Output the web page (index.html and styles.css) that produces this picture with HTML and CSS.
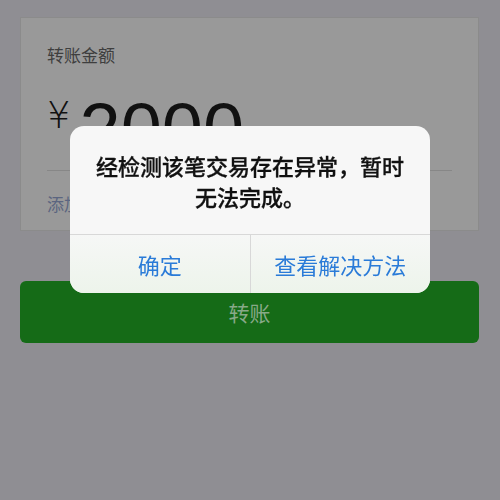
FILE: index.html
```html
<!DOCTYPE html>
<html lang="zh-CN">
<head>
<meta charset="UTF-8">
<meta name="viewport" content="width=device-width, initial-scale=1.0">
<title>转账</title>
<link rel="stylesheet" href="styles.css">
</head>
<body>
    <div class="page">
        <div class="transfer-card">
            <div class="card-label">转账金额</div>
            <div class="amount">
                <span class="currency">¥</span>
                <span class="amount-value">2000</span>
            </div>
            <div class="remark">添加转账说明</div>
        </div>
        <button class="transfer-btn" type="button">转账</button>
    </div>

    <div class="mask">
        <div class="alert">
            <div class="alert-msg">经检测该笔交易存在异常，暂时<br>无法完成。</div>
            <div class="alert-actions">
                <a href="#" class="alert-btn">确定</a>
                <a href="#" class="alert-btn">查看解决方法</a>
            </div>
        </div>
    </div>
</body>
</html>
```

FILE: styles.css
```css
body {
    margin: 0;
    padding: 0;
    background-color: #8f8e93;
    font-family: "Noto Sans CJK SC", "Liberation Sans", sans-serif;
}
.page {
    padding: 17px 21px 0 20px;
}
.transfer-card {
    background-color: #999999;
    border: 1px solid #8b8b8b;
    padding: 0 26px 0 26px;
    box-sizing: border-box;
    height: 214px;
}
.card-label {
    padding-top: 26px;
    font-size: 17px;
    line-height: 22px;
    color: #3e3e3e;
}
.amount {
    display: flex;
    align-items: flex-start;
    height: 104px;
    border-bottom: 1px solid #878787;
    color: #111;
    overflow: hidden;
}
.currency {
    font-family: "DejaVu Sans", sans-serif;
    font-weight: 300;
    font-size: 37px;
    margin-right: 9px;
    margin-top: 30px;
    line-height: 40px;
}
.amount-value {
    font-family: "Liberation Sans", sans-serif;
    font-size: 74px;
    line-height: 88px;
    margin-top: 20px;
}
.remark {
    padding-top: 20px;
    font-size: 17px;
    color: #5b6580;
}
.transfer-btn {
    display: block;
    width: 100%;
    height: 62px;
    margin-top: 50px;
    background-color: #156b17;
    border: none;
    border-radius: 6px;
    color: #88a988;
    font-family: "Noto Sans CJK SC", sans-serif;
    font-size: 21px;
}

/* alert sits over the whole page */
.mask {
    position: fixed;
    top: 0;
    left: 0;
    right: 0;
    bottom: 0;
    display: flex;
    justify-content: center;
    align-items: flex-start;
    padding-top: 126px;
}
.alert {
    width: 360px;
    background-color: #f7f7f7;
    border-radius: 14px;
    overflow: hidden;
}
.alert-msg {
    padding: 24px 10px 22px;
    text-align: center;
    font-size: 22px;
    line-height: 31px;
    font-weight: 500;
    color: #111;
    -webkit-text-stroke: 0.3px #111;
}
.alert-actions {
    display: flex;
    border-top: 1px solid #d8d8d8;
    background: linear-gradient(#f6f7f6, #edf4eb);
}
.alert-btn {
    flex: 1;
    height: 58px;
    line-height: 58px;
    text-align: center;
    text-decoration: none;
    font-size: 22px;
    color: #2a7bd8;
}
.alert-btn + .alert-btn {
    border-left: 1px solid #d8d8d8;
}
```
